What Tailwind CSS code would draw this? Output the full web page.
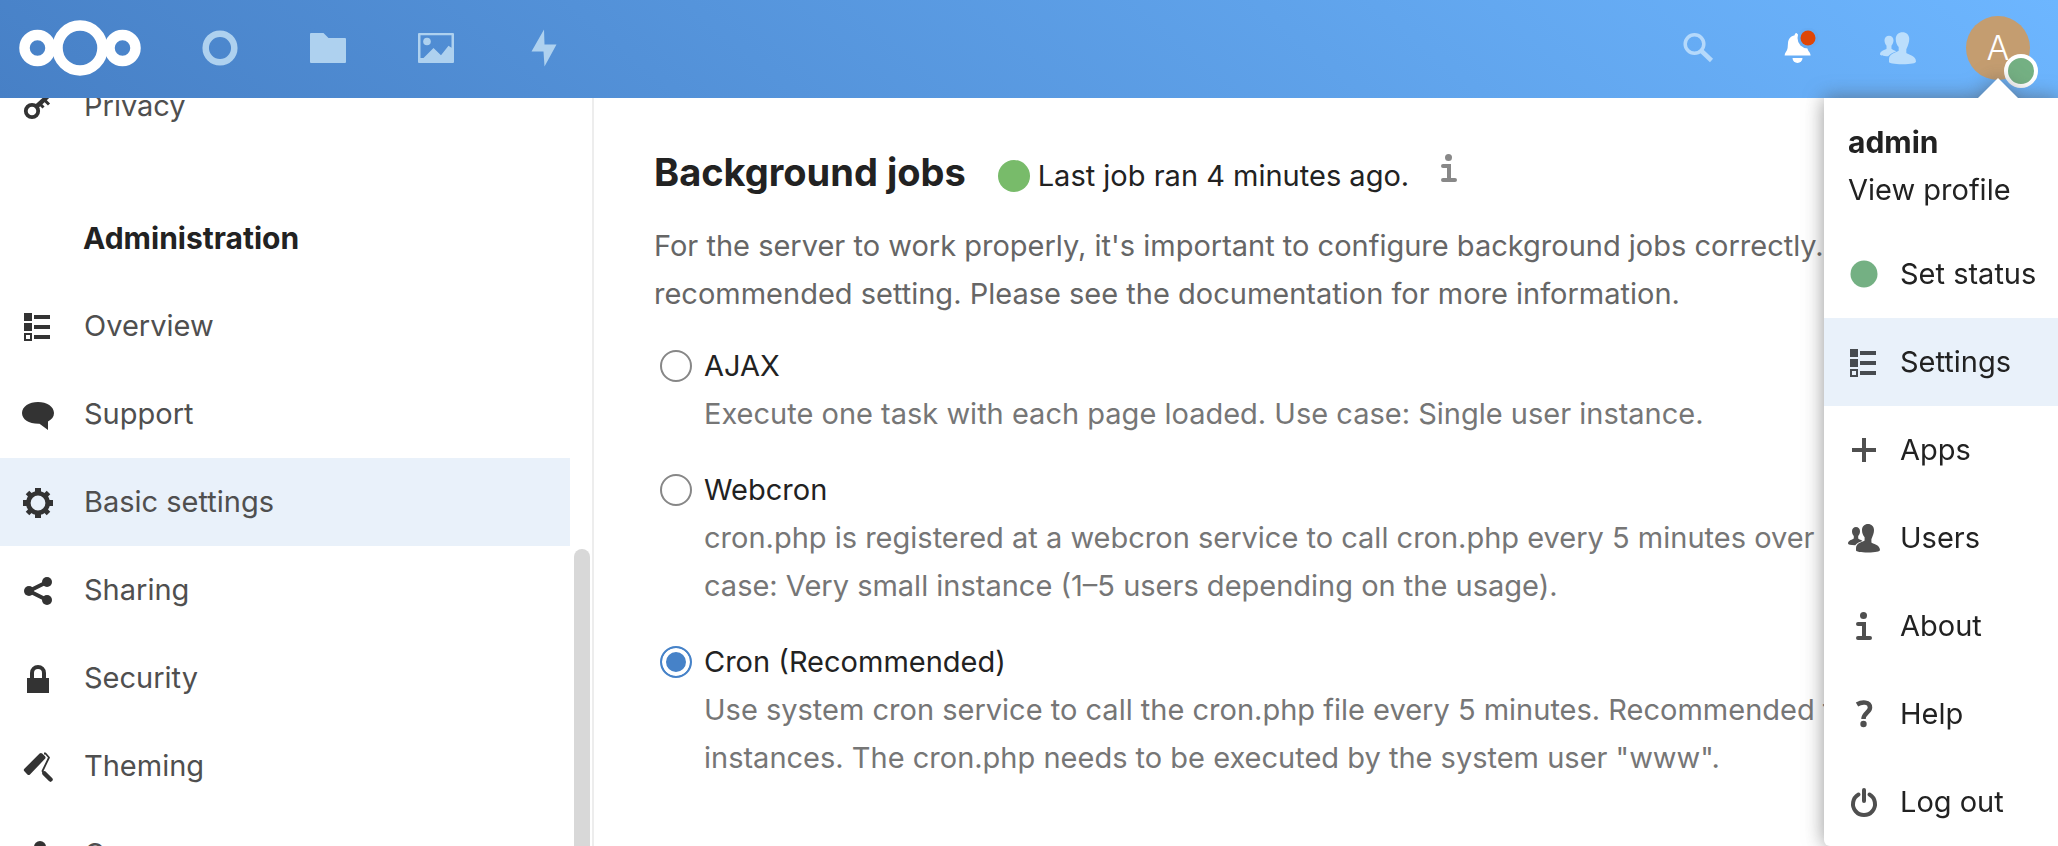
<!DOCTYPE html>
<html lang="en">
<head>
<meta charset="utf-8">
<title>Basic settings - Administration</title>
<script src="https://cdn.jsdelivr.net/npm/@tailwindcss/browser@4"></script>
</head>
<body class="flex h-screen flex-col overflow-hidden bg-white font-['Inter','Liberation_Sans',sans-serif] text-[29px] leading-[48px] text-[#222]">

<svg class="hidden" aria-hidden="true">
  <symbol id="list" viewBox="0 0 32 32"><path d="M2 3h8v8H2zM2 13h8v8H2zM12 5h16v4H12zM12 15h16v4H12zM12 25h16v4H12z"/><path fill-rule="evenodd" d="M2 23h8v8H2zM4 25v4h4v-4z"/></symbol>
  <symbol id="users" viewBox="0 0 32 32"><path d="M20 2c-3.400 0-6 2.400-6 6 0 3 1 5.400 2.600 7.200v3.300c-1 1.300-8.600 2-8.600 7.500v2.500c0 1 4.500 2 12 2s12-1 12-2.500c0-5.500-7.600-6.200-8.600-7.500v-3.300C25 13.400 26 11 26 8c0-3.600-2.600-6-6-6z"/><path d="M8 5c-2.300 0-4 1.700-4 4.200 0 2 .7 3.600 1.800 4.800v2.600C5 17.600 0 18.200 0 21.600c0 1 2.500 1.700 7.200 1.700 1.800-2.300 4.800-3.400 7.200-4.300-.8-.9-3.300-1.400-4.200-2.400V14C11.300 12.800 12 11.200 12 9.200 12 6.700 10.300 5 8 5z"/></symbol>
  <symbol id="info" viewBox="0 0 32 32"><circle cx="15.500" cy="5.500" r="3.500"/><path d="M10 12h8v14h4a2 2 0 0 1 0 4H10a2 2 0 0 1 0-4h4V16h-4a2 2 0 0 1 0-4z"/></symbol>
</svg>

<header class="flex h-[98px] shrink-0 items-center bg-linear-[40deg,#4780c6_0%,#6db6ff_100%] pr-[10px] pb-[2px] pl-[19px]">
  <a href="#" aria-label="Home" class="mr-[25px]">
    <svg class="h-14 w-[122px]" viewBox="0 0 122 56" fill="none" stroke="#fff" stroke-width="10.500"><circle cx="61" cy="28" r="22.500"/><circle cx="18.500" cy="28" r="13"/><circle cx="103.500" cy="28" r="13"/></svg>
  </a>
  <nav class="flex text-[#aed1ef]" aria-label="Apps">
    <a href="#" aria-label="Dashboard" class="flex w-[108px] justify-center"><svg class="size-10" viewBox="0 0 40 40" fill="none" stroke="currentColor" stroke-width="6.500"><circle cx="20" cy="20" r="14.300"/></svg></a>
    <a href="#" aria-label="Files" class="flex w-[108px] justify-center"><svg class="size-10" viewBox="0 0 40 40" fill="currentColor"><path d="M3 5h12.500l5 5H37a1 1 0 0 1 1 1v23a1 1 0 0 1-1 1H3a1 1 0 0 1-1-1V6a1 1 0 0 1 1-1z"/></svg></a>
    <a href="#" aria-label="Photos" class="flex w-[108px] justify-center"><svg class="size-10" viewBox="0 0 40 40" fill="currentColor"><path fill-rule="evenodd" d="M3 5h34a1 1 0 0 1 1 1v28a1 1 0 0 1-1 1H3a1 1 0 0 1-1-1V6a1 1 0 0 1 1-1zM4.500 7.200V30H7.500L17.500 20l7.500 7.300L32.500 17.800l3 2V7.200z"/><circle cx="11" cy="13.500" r="3.800"/></svg></a>
    <a href="#" aria-label="Activity" class="flex w-[108px] justify-center"><svg class="size-10" viewBox="0 0 40 40" fill="currentColor"><path d="M20 1.500 7.500 23.500H19.500L20.500 38.500 32.500 16.500H20.500z"/></svg></a>
  </nav>
  <div class="ml-auto flex items-center">
    <button aria-label="Search" class="flex w-25 justify-center"><svg class="size-10 text-[#b5d9fb]" viewBox="0 0 40 40" fill="none" stroke="currentColor"><circle cx="16.500" cy="16" r="9.300" stroke-width="3.500"/><path d="m23.500 23 10 9.500" stroke-width="4.500"/></svg></button>
    <button aria-label="Notifications" class="flex w-25 justify-center"><svg class="size-10" viewBox="0 0 40 40"><path fill="#fff" d="M18.500 5c-1.300 0-1.700 1-1.800 2.200C12.500 8 10.300 11 10 15l-.4 5c-.2 3-3 4.500-3 7.500h26c0-3-3-4.500-3.200-7.500L29 16z"/><path fill="#fff" d="M14.500 30h10a5 5 0 0 1-10 0z"/><circle cx="30" cy="10" r="10.500" fill="#66acf4"/><circle cx="30" cy="10" r="7.500" fill="#df4608"/></svg></button>
    <button aria-label="Contacts" class="flex w-25 justify-center"><svg class="size-9 fill-[#bbdefc]"><use href="#users"/></svg></button>
    <button aria-label="Account menu" class="flex w-25 justify-center">
      <span class="relative flex size-16 items-center justify-center rounded-full bg-[#c49d70] text-[34px] font-light text-white">A<span class="absolute top-[38px] left-[38px] size-[34px] rounded-full border-4 border-white bg-[#74b083]"></span></span>
    </button>
  </div>
</header>

<div class="flex min-h-0 flex-1">
  <nav aria-label="Settings" class="relative w-[594px] shrink-0 overflow-hidden border-r-2 border-[#ededed] pr-[22px] text-[#4f4f4f]">
    <ul class="-mt-9">
      <li><a href="#" class="flex h-22 items-center gap-[30px] pl-[22px]"><svg class="size-8" viewBox="0 0 32 32" fill="none" stroke="#333"><circle cx="10" cy="21" r="6.200" stroke-width="3.800"/><path d="M14 17 26 6" stroke-width="4.500"/><path d="m17.500 13.500 4 4M22 9.500l5 5" stroke-width="3"/></svg>Privacy</a></li>
      <li class="mt-11 pl-[83px] text-[30px] font-bold leading-[88px] text-[#222]">Administration</li>
      <li><a href="#" class="flex h-22 items-center gap-[30px] pl-[22px]"><svg class="size-8 fill-[#333]"><use href="#list"/></svg>Overview</a></li>
      <li><a href="#" class="flex h-22 items-center gap-[30px] pl-[22px]"><svg class="size-8" viewBox="0 0 32 32" fill="#333"><path d="M16 4c8.800 0 16 4.600 16 11 0 3.800-2.300 6.400-6 8.500V32l-8.500-6.300C7 26 0 21.500 0 15 0 8.600 7.200 4 16 4z"/></svg>Support</a></li>
      <li><a href="#" aria-current="page" class="flex h-22 items-center gap-[30px] bg-[#e9f1fa] pl-[22px]"><svg class="size-8" viewBox="0 0 32 32" fill="none" stroke="#333"><circle cx="16" cy="17" r="9.700" stroke-width="4.600"/><path stroke-width="6" d="M16 2v5M16 27v5M1 17h5M26 17h5"/><path stroke-width="5" d="m5.500 6.500 3 3M23.500 24.500l3 3M26.500 6.500l-3 3M8.500 24.500l-3 3"/></svg>Basic settings</a></li>
      <li><a href="#" class="flex h-22 items-center gap-[30px] pl-[22px]"><svg class="size-8" viewBox="0 0 32 32" fill="#333"><circle cx="25" cy="8" r="5"/><circle cx="7" cy="17" r="5"/><circle cx="25" cy="26" r="5"/><path d="M25 8 7 17l18 9" fill="none" stroke="#333" stroke-width="4"/></svg>Sharing</a></li>
      <li><a href="#" class="flex h-22 items-center gap-[30px] pl-[22px]"><svg class="size-8" viewBox="0 0 32 32"><path d="M5 16h22v15H5z" fill="#333"/><path d="M10 17v-6a6 6 0 0 1 12 0v6" fill="none" stroke="#333" stroke-width="4"/></svg>Security</a></li>
      <li><a href="#" class="flex h-22 items-center gap-[30px] pl-[22px]"><svg class="size-8" viewBox="0 0 32 32" fill="none" stroke="#333" stroke-linejoin="round"><path d="M2.600 18.500 17.600 3.600a2 2 0 0 1 2.600 0L23 6.200a2 2 0 0 1 0 2.600L8 24.400a2 2 0 0 1-2.600 0L2.600 21.500a2 2 0 0 1 0-3z" fill="#333" stroke="none"/><path d="m22 3.500 1.500 0 3.500 4-6.500 13.500 1 2" stroke-width="1.800"/><path d="m22.500 23.500 6 6" stroke-width="4.500" stroke-linecap="round"/></svg>Theming</a></li>
      <li><a href="#" class="flex h-22 items-center gap-[30px] pl-[22px]"><svg class="size-8" viewBox="0 0 32 32" fill="#333"><circle cx="18" cy="9" r="6"/><path d="M6 31c0-9 4-14 12-14s12 5 12 14z"/></svg>Groupware</a></li>
    </ul>
    <div class="absolute top-[451px] right-[2px] h-[320px] w-[16px] rounded-full bg-[#d8d8d8]"></div>
  </nav>

  <main class="min-w-0 flex-1 overflow-hidden pt-[50px] pl-[60px] whitespace-nowrap">
    <div class="flex h-[60px] items-start">
      <h2 class="text-[38px] leading-[48px] font-bold">Background jobs</h2>
      <span class="mt-3 ml-8 size-8 rounded-full bg-[#78bb6a]"></span>
      <span class="mt-1 ml-2">Last job ran 4 minutes ago.</span>
      <a href="#" aria-label="Open documentation" class="mt-1 ml-6"><svg class="size-8 fill-[#888]"><use href="#info"/></svg></a>
    </div>
    <p class="mt-[14px] text-[#666]">For the server to work properly, it's important to configure background jobs correctly. Cron is the<br>recommended setting. Please see the documentation for more information.</p>
    <form class="mt-6 pl-[6px] text-[#767676]">
      <div class="mb-7">
        <label class="flex items-center gap-3 text-[#222]"><input type="radio" name="mode" class="size-8 appearance-none rounded-full border-2 border-[#878787] checked:border-[#4682c8] checked:bg-[#4682c8] checked:shadow-[inset_0_0_0_4px_white]">AJAX</label>
        <p class="pl-11">Execute one task with each page loaded. Use case: Single user instance.</p>
      </div>
      <div class="mb-7">
        <label class="flex items-center gap-3 text-[#222]"><input type="radio" name="mode" class="size-8 appearance-none rounded-full border-2 border-[#878787] checked:border-[#4682c8] checked:bg-[#4682c8] checked:shadow-[inset_0_0_0_4px_white]">Webcron</label>
        <p class="pl-11">cron.php is registered at a webcron service to call cron.php every 5 minutes over HTTP. Use<br>case: Very small instance (1–5 users depending on the usage).</p>
      </div>
      <div>
        <label class="flex items-center gap-3 text-[#222]"><input type="radio" name="mode" checked class="size-8 appearance-none rounded-full border-2 border-[#878787] checked:border-[#4682c8] checked:bg-[#4682c8] checked:shadow-[inset_0_0_0_4px_white]">Cron (Recommended)</label>
        <p class="pl-11">Use system cron service to call the cron.php file every 5 minutes. Recommended for all<br>instances. The cron.php needs to be executed by the system user "www".</p>
      </div>
    </form>
  </main>
</div>

<!-- Account menu, opened below the avatar -->
<div class="absolute top-[98px] right-0 w-[234px] rounded-bl-md bg-white pt-5 drop-shadow-[0_0_10px_rgba(77,77,77,0.6)]">
  <svg class="absolute -top-5 right-10 h-5 w-10 fill-white" viewBox="0 0 40 20"><path d="M20 0 40 20H0z"/></svg>
  <a href="#" class="block px-6 pb-4"><strong class="block text-[30px] font-bold">admin</strong>View profile</a>
  <ul class="whitespace-nowrap">
    <li><button class="flex h-22 w-full items-center gap-5 pl-6"><svg class="size-8" viewBox="0 0 32 32"><circle cx="16" cy="16" r="13.500" fill="#74b083"/></svg>Set status</button></li>
    <li><a href="#" class="flex h-22 items-center gap-5 bg-[#e9f1fa] pl-6"><svg class="size-8 fill-[#474b4f]"><use href="#list"/></svg>Settings</a></li>
    <li><a href="#" class="flex h-22 items-center gap-5 pl-6"><svg class="size-8 fill-[#4f4f4f]" viewBox="0 0 32 32"><path d="M14 4h4v10h10v4H18v10h-4V18H4v-4h10z"/></svg>Apps</a></li>
    <li><a href="#" class="flex h-22 items-center gap-5 pl-6"><svg class="size-8 fill-[#4f4f4f]"><use href="#users"/></svg>Users</a></li>
    <li><a href="#" class="flex h-22 items-center gap-5 pl-6"><svg class="size-8 fill-[#4f4f4f]"><use href="#info"/></svg>About</a></li>
    <li><a href="#" class="flex h-22 items-center gap-5 pl-6"><svg class="size-8" viewBox="0 0 32 32" fill="none" stroke="#4f4f4f" stroke-width="4.500"><path d="M9 6.500C14 3.500 22 3.500 22 9.500c0 5-6.500 5.500-6.500 11.500"/><circle cx="15.500" cy="26" r="3.200" fill="#4f4f4f" stroke="none"/></svg>Help</a></li>
    <li><a href="#" class="flex h-22 items-center gap-5 pl-6"><svg class="size-8" viewBox="0 0 32 32" fill="none" stroke="#4f4f4f" stroke-width="4" stroke-linecap="round"><path d="M16 4v11M21.500 8.500a11 11 0 1 1-11 0"/></svg>Log out</a></li>
  </ul>
</div>
</body>
</html>
